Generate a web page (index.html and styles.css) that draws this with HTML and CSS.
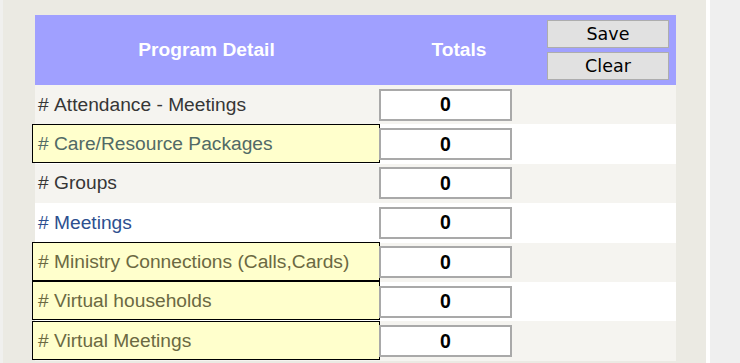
FILE: index.html
```html
<!DOCTYPE html>
<html lang="en">

<head>
    <meta charset="UTF-8">
    <meta name="viewport" content="width=device-width, initial-scale=1.0">
    <title>Program Detail</title>
    <link rel="stylesheet" href="styles.css">
</head>

<body>
    <div class="edge"></div>
    <div class="main">
        <table class="detail">
            <colgroup>
                <col class="c-label">
                <col class="c-total">
                <col class="c-btn">
            </colgroup>
            <thead>
                <tr>
                    <th>Program Detail</th>
                    <th>Totals</th>
                    <th class="btns">
                        <button type="button">Save</button>
                        <button type="button">Clear</button>
                    </th>
                </tr>
            </thead>
            <tbody>
                <tr>
                    <td class="label">#&nbsp;Attendance - Meetings</td>
                    <td><input type="text" value="0"></td>
                    <td></td>
                </tr>
                <tr>
                    <td class="label"><div class="hl care"># Care/Resource Packages</div></td>
                    <td><input type="text" value="0"></td>
                    <td></td>
                </tr>
                <tr>
                    <td class="label"># Groups</td>
                    <td><input type="text" value="0"></td>
                    <td></td>
                </tr>
                <tr>
                    <td class="label link"># Meetings</td>
                    <td><input type="text" value="0"></td>
                    <td></td>
                </tr>
                <tr>
                    <td class="label"><div class="hl"># Ministry Connections (Calls,Cards)</div></td>
                    <td><input type="text" value="0"></td>
                    <td></td>
                </tr>
                <tr>
                    <td class="label"><div class="hl"># Virtual households</div></td>
                    <td><input type="text" value="0"></td>
                    <td></td>
                </tr>
                <tr>
                    <td class="label"><div class="hl"># Virtual Meetings</div></td>
                    <td><input type="text" value="0"></td>
                    <td></td>
                </tr>
            </tbody>
        </table>
    </div>
    <div class="gap"></div>
    <div class="side"></div>
</body>

</html>
```

FILE: styles.css
```css
* {
    margin: 0;
    padding: 0;
}

body {
    display: flex;
    height: 100vh;
    overflow: hidden;
    background: #ebeae3;
    font-family: "Liberation Sans", Arial, sans-serif;
}

.edge {
    flex: 0 0 3px;
    background: #f0f0ee;
}

.main {
    flex: 0 0 703px;
    box-sizing: border-box;
    padding: 15px 0 0 32px;
}

.gap {
    flex: 0 0 4px;
    background: #fff;
}

.side {
    flex: 1;
    background: #efefef;
}

.detail {
    width: 641px;
    border-collapse: collapse;
    table-layout: fixed;
}

.c-label {
    width: 343px;
}

.c-total {
    width: 162px;
}

.c-btn {
    width: 136px;
}

.detail thead th {
    height: 70px;
    background: #a0a0ff;
    color: #fff;
    font-size: 19.2px;
    font-weight: bold;
    text-align: center;
    padding: 0;
}

.detail thead th.btns {
    padding: 0 7px;
}

.btns button {
    display: block;
    width: 122px;
    height: 28px;
    background: #e1e1e1;
    border: 1px solid #adadad;
    color: #000;
    font-family: "DejaVu Sans", sans-serif;
    font-size: 17.5px;
    line-height: 26px;
}

.btns button + button {
    margin-top: 4px;
}

.detail tbody tr {
    height: 39.4px;
    background: #f5f4f0;
}

.detail tbody tr:nth-child(even) {
    background: #fff;
}

.detail td {
    padding: 0;
    font-size: 19.2px;
    vertical-align: middle;
}

.detail td.label {
    padding-left: 3px;
    color: #363636;
    white-space: nowrap;
}

.detail td.link {
    color: #2d4f8f;
}

.hl {
    box-sizing: border-box;
    width: 348px;
    height: 39px;
    line-height: 37px;
    margin: -2px 0 0 -6px;
    padding-left: 5px;
    background: #ffffcc;
    border: 1px solid #000;
    color: #6b6942;
}

.hl.care {
    color: #516a66;
}

.detail input {
    display: block;
    box-sizing: border-box;
    width: 133px;
    height: 32px;
    margin-left: 1px;
    border: 2px solid #a9a9a9;
    background: #fff;
    text-align: center;
    font-family: "Liberation Sans", Arial, sans-serif;
    font-size: 19.5px;
    font-weight: bold;
    color: #000;
}
```
